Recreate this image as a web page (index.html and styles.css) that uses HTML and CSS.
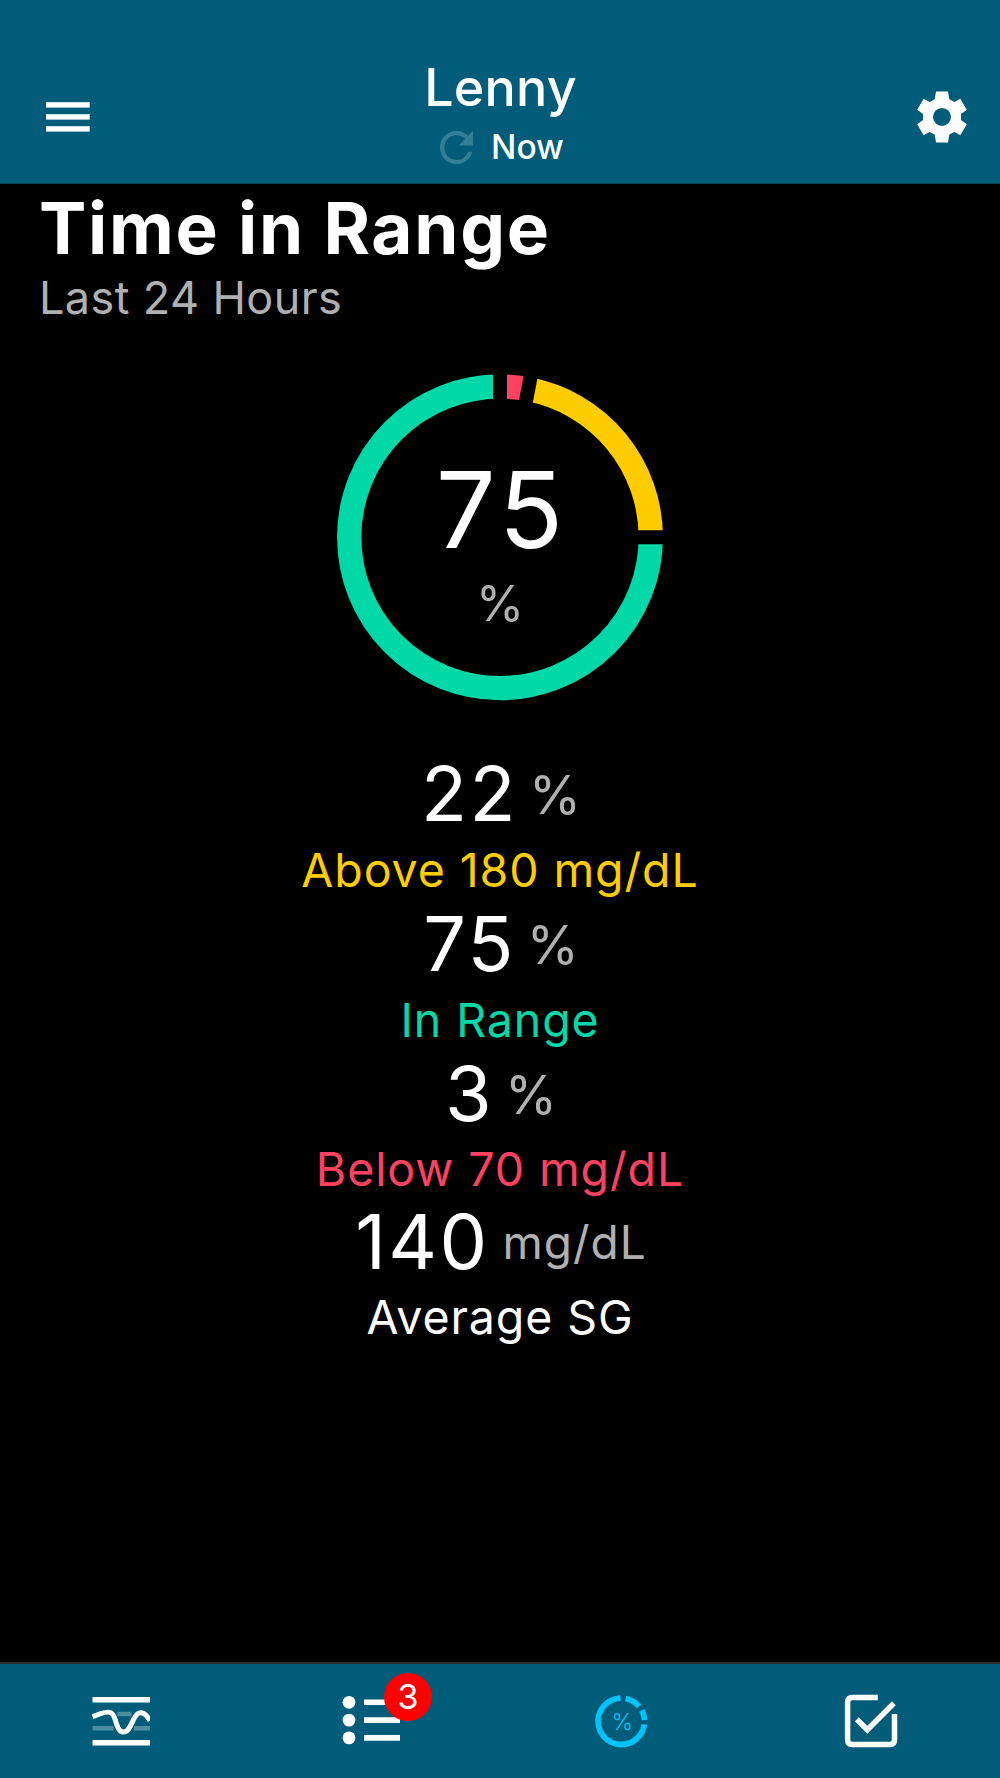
FILE: index.html
```html
<!DOCTYPE html>
<html lang="en">
<head>
    <meta charset="UTF-8">
    <meta name="viewport" content="width=device-width, initial-scale=1.0">
    <title>Time in Range</title>
    <link rel="stylesheet" href="styles.css">
</head>
<body>

    <header class="top-bar">
        <button class="icon-btn menu-btn" aria-label="Menu">
            <svg width="44" height="30" viewBox="0 0 44 30" fill="#fff">
                <rect y="0.2" width="43.7" height="5.4"/>
                <rect y="12.2" width="43.7" height="5.4"/>
                <rect y="24.2" width="43.7" height="5.4"/>
            </svg>
        </button>
        <div class="patient">
            <h2>Lenny</h2>
            <p class="updated">
                <svg class="refresh" width="33" height="33" viewBox="4 4 16 16">
                    <path fill="#317f95" d="M17.65 6.35C16.2 4.9 14.21 4 12 4c-4.42 0-7.99 3.58-7.99 8s3.57 8 7.99 8c3.73 0 6.84-2.55 7.73-6h-2.08c-.82 2.33-3.04 4-5.65 4-3.31 0-6-2.69-6-6s2.69-6 6-6c1.66 0 3.14.69 4.22 1.78L13 11h7V4l-2.35 2.35z"/>
                </svg>
                <span>Now</span>
            </p>
        </div>
        <button class="icon-btn settings-btn" aria-label="Settings">
            <svg width="50" height="52" viewBox="37 30.5 50 52">
                <path fill="#fff" fill-rule="evenodd" d="M56 31H68L69.3 38.7L74.5 41.4L80.3 38.3L86.8 49.3L81 53.5V59.5L86.8 63.8L80.3 74.7L74.5 71.6L69.3 74L68 82H56L54.7 74L49.5 71.6L43.6 74.7L37.2 63.8L43 59.5V53.5L37.2 49.3L43.6 38.3L49.7 41.4L54.7 38.7Z M62 47.4a9 9 0 1 0 0 18a9 9 0 1 0 0 -18Z"/>
            </svg>
        </button>
    </header>

    <main>
        <h1>Time in Range</h1>
        <p class="period">Last 24 Hours</p>

        <div class="chart">
            <svg width="326" height="326" viewBox="-163 -163.3 326 326">
                <g fill="none" stroke-width="24.3" transform="rotate(-90)">
                    <circle r="150.8" pathLength="100" stroke="#ff4161" stroke-dasharray="3 97"/>
                    <circle r="150.8" pathLength="100" stroke="#ffcc00" stroke-dasharray="22 78" stroke-dashoffset="-3"/>
                    <circle r="150.8" pathLength="100" stroke="#00d8a8" stroke-dasharray="75 25" stroke-dashoffset="-25"/>
                </g>
                <!-- gaps between segments -->
                <g stroke="#000" stroke-width="14">
                    <path d="M0 -130V-170"/>
                    <path d="M0 -130V-170" transform="rotate(10.8)"/>
                    <path d="M130 0H170"/>
                </g>
            </svg>
            <div class="chart-label">
                <span class="chart-value">75</span>
                <span class="chart-unit">%</span>
            </div>
        </div>

        <div class="stats">
            <div class="stat above">
                <p class="value">22<span class="unit percent">%</span></p>
                <p class="label">Above 180 mg/dL</p>
            </div>
            <div class="stat in-range">
                <p class="value">75<span class="unit percent">%</span></p>
                <p class="label">In Range</p>
            </div>
            <div class="stat below">
                <p class="value">3<span class="unit percent">%</span></p>
                <p class="label">Below 70 mg/dL</p>
            </div>
            <div class="stat average">
                <p class="value">140<span class="unit">mg/dL</span></p>
                <p class="label">Average SG</p>
            </div>
        </div>
    </main>

    <nav class="tab-bar">
        <a class="tab">
            <svg width="58" height="54" viewBox="-0.5 -2 58 54" fill="none">
                <path stroke="#4c8da2" stroke-width="4.5" d="M25 18H39M0 32.3H21M41.5 32.3H57.6"/>
                <path stroke="#fff" stroke-width="5.5" d="M0 3.7H57.6M0 46.7H57.6"/>
                <path stroke="#fff" stroke-width="5" d="M0 20.7L8 17.7C16 15 20 15 22.5 23C25 31.5 26.5 36 31 36C36 36 38 30 41 23.5C45.5 14.2 51.5 14.2 57.6 24.7"/>
            </svg>
        </a>
        <a class="tab">
            <svg width="58" height="54" viewBox="-0.5 -2 58 54" fill="#fff">
                <circle cx="6.5" cy="6.3" r="6.4"/>
                <circle cx="6.5" cy="24.1" r="6.4"/>
                <circle cx="6.5" cy="41.9" r="6.4"/>
                <path stroke="#fff" stroke-width="5.6" d="M21.5 6.3H57.5M21.5 24.1H57.5M21.5 41.9H57.5"/>
            </svg>
            <span class="badge">3</span>
        </a>
        <a class="tab active">
            <svg width="54" height="54" viewBox="-27.3 -27.3 54 54" fill="none">
                <g stroke="#00c3ff" stroke-width="5.8" transform="rotate(-90)">
                    <circle r="23.2" pathLength="360" stroke-dasharray="39 321" stroke-dashoffset="-11"/>
                    <circle r="23.2" pathLength="360" stroke-dasharray="25 335" stroke-dashoffset="-62"/>
                    <circle r="23.2" pathLength="360" stroke-dasharray="260 100" stroke-dashoffset="-98"/>
                </g>
                <text class="tab-percent" x="1" y="8.5" text-anchor="middle">%</text>
            </svg>
        </a>
        <a class="tab">
            <svg width="54" height="54" viewBox="-0.8 -0.8 54 54" fill="none" stroke="#fff" stroke-width="5.5">
                <path d="M33 2.8H7.3Q2.8 2.8 2.8 7.3V45.2Q2.8 49.7 7.3 49.7H45.2Q49.7 49.7 49.7 45.2V19.3"/>
                <path d="M12 24.5L22.5 35L49 8.5"/>
            </svg>
        </a>
    </nav>

</body>
</html>
```
FILE: styles.css
```css
* {
    margin: 0;
    padding: 0;
    box-sizing: border-box;
    font-family: "Inter", sans-serif;
}

body {
    display: flex;
    flex-direction: column;
    height: 1778px;
    background: #000;
    color: #fff;
}

.top-bar {
    display: grid;
    grid-template-columns: 1fr auto 1fr;
    align-items: center;
    height: 184px;
    padding: 57px 33px 9px 46px;
    background: #005c78;
    border-bottom: 1px solid #004a61;
}

.icon-btn {
    display: flex;
    border: none;
    background: none;
}

.settings-btn {
    justify-self: end;
}

.patient {
    display: flex;
    flex-direction: column;
    align-items: center;
    margin-right: 12px;
}

.patient h2 {
    font-size: 52px;
    font-weight: 500;
    line-height: 61px;
    letter-spacing: 0.2px;
}

.updated {
    display: flex;
    align-items: center;
    gap: 18px;
    padding-left: 3px;
    font-size: 33.5px;
    font-weight: 500;
    line-height: 58px;
}

main {
    flex: 1;
    padding-top: 1px;
}

h1 {
    padding-left: 39px;
    font-size: 71px;
    font-weight: 700;
    line-height: 86px;
    letter-spacing: 1.7px;
}

.period {
    padding-left: 39px;
    font-size: 45px;
    line-height: 54px;
    letter-spacing: 0.4px;
    color: #b0b0b0;
}

.chart {
    position: relative;
    width: 326px;
    height: 326px;
    margin: 49px auto 0;
}

.chart svg {
    display: block;
    overflow: visible;
}

.chart-label {
    position: absolute;
    inset: 0;
    display: flex;
    flex-direction: column;
    align-items: center;
    padding-top: 76px;
}

.chart-value {
    padding-left: 3px;
    font-size: 106px;
    line-height: 120px;
    letter-spacing: 4px;
}

.chart-unit {
    font-size: 49px;
    line-height: 67px;
    color: #b0b0b0;
}

.stats {
    margin-top: 50.4px;
    text-align: center;
}

.stat {
    height: 149.7px;
}

.value {
    display: flex;
    justify-content: center;
    align-items: center;
    gap: 13px;
    padding-left: 2px;
    font-size: 75.5px;
    line-height: 86px;
    letter-spacing: 2.4px;
}

.unit {
    font-size: 46px;
    letter-spacing: 1px;
    color: #b0b0b0;
}

.percent {
    margin-left: -2px;
    padding-top: 2px;
    font-size: 53px;
    letter-spacing: 0;
}

.label {
    padding-top: 0.5px;
    font-size: 46.5px;
    line-height: 63px;
    letter-spacing: 0.9px;
}

.above .label {
    color: #ffcc00;
}

.in-range .label {
    color: #00d8a8;
}

.below .label {
    color: #ff4161;
}

.tab-bar {
    display: grid;
    grid-template-columns: repeat(4, 1fr);
    height: 116px;
    background: #005c78;
    border-top: 2px solid #2e2b2c;
}

.tab {
    position: relative;
    display: flex;
    justify-content: center;
    align-items: center;
    padding-right: 8px;
}

.badge {
    position: absolute;
    top: 9px;
    left: 134px;
    width: 48px;
    height: 48px;
    border-radius: 50%;
    background: #ff0000;
    font-size: 34px;
    line-height: 47px;
    text-align: center;
}

.tab-percent {
    font-size: 23px;
    font-weight: 300;
    fill: #00c3ff;
}
```
